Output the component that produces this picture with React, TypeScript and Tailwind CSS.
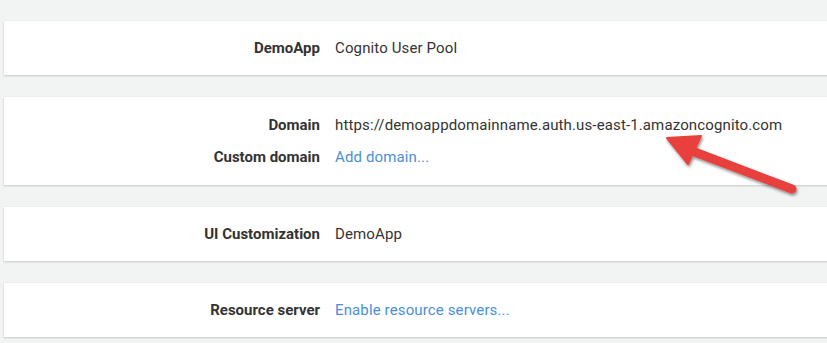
import React from 'react';

type Row = { label: string; value: string; link?: boolean };

const cards: Row[][] = [
  [{ label: 'DemoApp', value: 'Cognito User Pool' }],
  [
    { label: 'Domain', value: 'https://demoappdomainname.auth.us-east-1.amazoncognito.com' },
    { label: 'Custom domain', value: 'Add domain...', link: true },
  ],
  [{ label: 'UI Customization', value: 'DemoApp' }],
  [{ label: 'Resource server', value: 'Enable resource servers...', link: true }],
];

function Card({ rows }: { rows: Row[] }) {
  return (
    <div className="bg-white ml-[4px] py-[17px] flex flex-col gap-[12px] shadow-[0_1px_2px_0_rgba(0,28,36,0.18),0_0_1px_0_rgba(0,28,36,0.08)]">
      {rows.map((r) => (
        <div key={r.label} className="flex items-center h-[20px] leading-[20px]">
          <div className="w-[316px] text-right font-bold text-[#333]">{r.label}</div>
          <div className={`ml-[15px] whitespace-nowrap tracking-[0.13px] ${r.link ? 'text-[#4a8fd8]' : 'text-[#333]'}`}>{r.value}</div>
        </div>
      ))}
    </div>
  );
}

export default function App() {
  return (
    <div className="relative w-[827px] h-[343px] overflow-hidden bg-[#f2f3f3] pt-[21px] font-['Roboto',sans-serif] text-[15px]">
      <div className="flex flex-col gap-[22px] w-[830px]">
        <Card rows={cards[0]} />
        <div className="[&>div]:py-[18px]">
          <Card rows={cards[1]} />
        </div>
        <Card rows={cards[2]} />
        <Card rows={cards[3]} />
      </div>

      {/* red arrow pointing at the domain */}
      <svg className="absolute left-0 top-0" width="827" height="343" viewBox="0 0 827 343">
        <defs>
          <filter id="sh" x="-20%" y="-20%" width="140%" height="160%">
            <feDropShadow dx="1" dy="2" stdDeviation="1.5" floodColor="#000" floodOpacity="0.45" />
          </filter>
        </defs>
        <g filter="url(#sh)" fill="#e8403e" stroke="#e8403e">
          <line x1="692" y1="151" x2="792" y2="189" strokeWidth="9" strokeLinecap="round" />
          <polygon points="667,138 701,136 688,164" strokeWidth="2" strokeLinejoin="round" />
        </g>
      </svg>
    </div>
  );
}
